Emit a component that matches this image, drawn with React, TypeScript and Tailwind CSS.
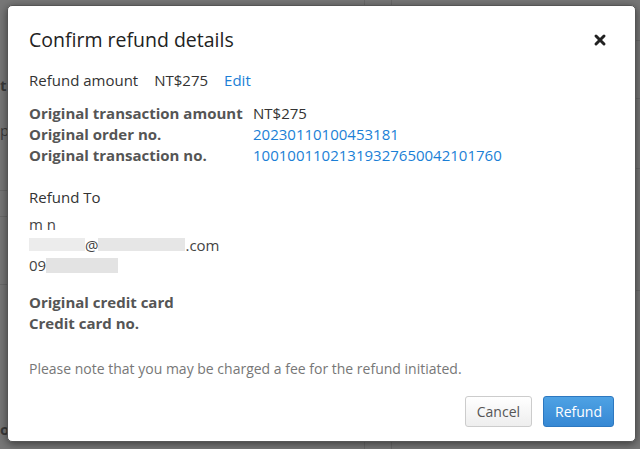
import { X } from "lucide-react";

export default function App() {
  return (
    <div
      className="relative w-[640px] h-[449px] overflow-hidden bg-[#777777]"
      style={{ fontFamily: '"Open Sans", "Liberation Sans", sans-serif' }}
    >
      {/* page behind the overlay */}
      <div className="absolute inset-0 text-[#3a3a3a] text-[15px]">
        <div className="absolute left-0 top-[74px] font-bold">t</div>
        <div className="absolute left-0 top-[119px]">p</div>
        <div className="absolute left-0 top-[418px] font-bold">o</div>
        <div className="absolute left-0 top-[190px] w-[8px] h-px bg-[#6a6a6a]" />
        <div className="absolute left-0 top-[216px] w-[8px] h-px bg-[#6a6a6a]" />
        <div className="absolute left-0 top-[284px] w-[8px] h-px bg-[#6a6a6a]" />
        <div className="absolute right-0 top-[40px] w-[6px] h-px bg-[#6a6a6a]" />
        <div className="absolute right-0 top-[98px] w-[6px] h-px bg-[#6a6a6a]" />
        <div className="absolute right-0 top-[168px] w-[6px] h-px bg-[#6a6a6a]" />
        <div className="absolute right-0 top-[290px] w-[6px] h-px bg-[#6a6a6a]" />
        <div className="absolute left-[364px] top-0 w-px h-[5px] bg-[#6a6a6a]" />
        <div className="absolute left-[391px] top-0 w-px h-[5px] bg-[#6a6a6a]" />
        <div className="absolute left-[364px] bottom-0 w-px h-[7px] bg-[#6a6a6a]" />
        <div className="absolute left-[391px] bottom-0 w-px h-[7px] bg-[#6a6a6a]" />
      </div>

      {/* modal */}
      <div className="absolute left-[7px] top-[5px] w-[629px] h-[437px] bg-white rounded-[5px] shadow-[0_2px_8px_rgba(0,0,0,0.5)] border border-[#555] px-[21px] pt-[20px] text-[15px] text-[#333]">
        <div className="flex items-center justify-between">
          <h2 className="text-[19.5px] leading-[28px] text-[#222]">Confirm refund details</h2>
          <button className="mr-[6px] text-[#222]">
            <X size={16} strokeWidth={4.5} />
          </button>
        </div>

        <div className="mt-[16px] leading-[21px] flex gap-[16px]">
          <span>Refund amount</span>
          <span>NT$275</span>
          <span className="text-[#1b7fd6]">Edit</span>
        </div>

        <div className="mt-[12px] grid grid-cols-[224px_1fr] leading-[21px]">
          <div className="font-bold text-[#555]">Original transaction amount</div>
          <div>NT$275</div>
          <div className="font-bold text-[#555]">Original order no.</div>
          <div className="text-[#1b7fd6]">20230110100453181</div>
          <div className="font-bold text-[#555]">Original transaction no.</div>
          <div className="text-[#1b7fd6]">10010011021319327650042101760</div>
        </div>

        <div className="mt-[21px] leading-[21px]">Refund To</div>
        <div className="mt-[6px] leading-[20.5px] text-[#444]">
          <div>m n</div>
          <div className="flex items-center">
            <span className="inline-block w-[56px] h-[13px] bg-[#ececec]" />
            <span>@</span>
            <span className="inline-block w-[87px] h-[13px] bg-[#e6e6e6]" />
            <span>.com</span>
          </div>
          <div className="flex items-center">
            <span>09</span>
            <span className="inline-block w-[72px] h-[15px] bg-[#e3e3e3]" />
          </div>
        </div>

        <div className="mt-[16.5px] leading-[21px] font-bold text-[#555]">
          <div>Original credit card</div>
          <div>Credit card no.</div>
        </div>

        <div className="mt-[24.5px] text-[14px] leading-[20px] text-[#777]">
          Please note that you may be charged a fee for the refund initiated.
        </div>

        <div className="mt-[17px] flex justify-end gap-[11px]">
          <button className="h-[31px] px-[11px] rounded-[3px] border border-[#cccccc] bg-gradient-to-b from-white to-[#eeeeee] text-[14px] text-[#555]">
            Cancel
          </button>
          <button className="h-[31px] px-[11px] rounded-[3px] border border-[#2d78c0] bg-gradient-to-b from-[#4ea2e4] to-[#3688d4] text-[14px] text-white">
            Refund
          </button>
        </div>
      </div>
    </div>
  );
}
